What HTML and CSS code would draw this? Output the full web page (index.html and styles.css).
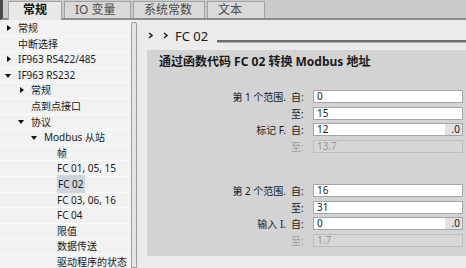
FILE: index.html
```html
<!DOCTYPE html>
<html lang="zh">
<head>
    <meta charset="UTF-8">
    <title>FC 02</title>
    <link rel="stylesheet" href="styles.css">
</head>
<body>
    <div class="tabs">
        <div class="tab active">常规</div>
        <div class="tab">IO 变量</div>
        <div class="tab">系统常数</div>
        <div class="tab">文本</div>
    </div>

    <div class="main">
        <ul class="tree">
            <li class="lv0 closed">常规</li>
            <li class="lv0">中断选择</li>
            <li class="lv0 closed">IF963 RS422/485</li>
            <li class="lv0 open">IF963 RS232</li>
            <li class="lv1 closed">常规</li>
            <li class="lv1">点到点接口</li>
            <li class="lv1 open">协议</li>
            <li class="lv2 open">Modbus 从站</li>
            <li class="lv3">帧</li>
            <li class="lv3">FC 01, 05, 15</li>
            <li class="lv3"><span class="selected">FC 02</span></li>
            <li class="lv3">FC 03, 06, 16</li>
            <li class="lv3">FC 04</li>
            <li class="lv3">限值</li>
            <li class="lv3">数据传送</li>
            <li class="lv3">驱动程序的状态</li>
        </ul>

        <div class="splitter"></div>

        <div class="content">
            <div class="crumb">
                <svg class="chev" width="6" height="7" viewBox="0 0 6 7"><path d="M1 1 L4 3.5 L1 6" fill="none" stroke="#222" stroke-width="1.6"/></svg>
                <svg class="chev" width="6" height="7" viewBox="0 0 6 7"><path d="M1 1 L4 3.5 L1 6" fill="none" stroke="#222" stroke-width="1.6"/></svg>
                <span class="crumb-title">FC 02</span>
                <span class="crumb-line"></span>
            </div>

            <div class="panel">
                <h2>通过函数代码 FC 02 转换 Modbus 地址</h2>

                <div class="group">
                    <div class="row">
                        <span class="label">第 1 个范围.</span>
                        <span class="sub">自:</span>
                        <span class="field">0</span>
                    </div>
                    <div class="row">
                        <span class="label"></span>
                        <span class="sub">至:</span>
                        <span class="field">15</span>
                    </div>
                    <div class="row">
                        <span class="label">标记 F.</span>
                        <span class="sub">自:</span>
                        <span class="field">12<span class="bit">.0</span></span>
                    </div>
                    <div class="row off">
                        <span class="label"></span>
                        <span class="sub">至:</span>
                        <span class="field">13.7</span>
                    </div>
                </div>

                <div class="group second">
                    <div class="row">
                        <span class="label">第 2 个范围.</span>
                        <span class="sub">自:</span>
                        <span class="field">16</span>
                    </div>
                    <div class="row">
                        <span class="label"></span>
                        <span class="sub">至:</span>
                        <span class="field">31</span>
                    </div>
                    <div class="row">
                        <span class="label">输入 I.</span>
                        <span class="sub">自:</span>
                        <span class="field">0<span class="bit">.0</span></span>
                    </div>
                    <div class="row off">
                        <span class="label"></span>
                        <span class="sub">至:</span>
                        <span class="field">1.7</span>
                    </div>
                </div>
            </div>
        </div>
    </div>
</body>
</html>
```

FILE: styles.css
```css
body {
    margin: 0;
    width: 466px;
    height: 268px;
    overflow: hidden;
    font-family: "Noto Sans", "Noto Sans CJK SC", sans-serif;
    font-size: 10px;
    color: #1a1a1a;
    background: #ececec;
}

/* tab strip */
.tabs {
    height: 18px;
    display: flex;
    align-items: flex-end;
    padding-left: 5px;
    gap: 2px;
    background: #cacaca;
    border-bottom: 2px solid #8c8c8c;
    border-left: 3px solid #4a4a4a;
}

.tab {
    height: 16px;
    line-height: 16px;
    padding: 0 10px;
    font-size: 12px;
    color: #4a4a4a;
    background: #d9d9d9;
    border: 1px solid #a2a2a2;
    border-bottom: none;
}

.tab:nth-child(2) { width: 45px; }
.tab:nth-child(3) { width: 50px; }
.tab:nth-child(4) { width: 36px; }

.tab.active {
    height: 18px;
    width: 32px;
    margin-bottom: -2px;
    font-weight: bold;
    color: #111;
    background: #e8e8e8;
    text-align: center;
}

.main {
    display: flex;
    height: 248px;
}

/* tree on the left */
.tree {
    list-style: none;
    margin: 0;
    padding: 1px 0 0 0;
    width: 131px;
    background: #f2f2f2;
    overflow: hidden;
}

.tree li {
    position: relative;
    height: 14.6px;
    line-height: 14.6px;
    border-bottom: 1px solid #fbfbfb;
    white-space: nowrap;
}

.lv0 { padding-left: 18px; }
.lv1 { padding-left: 31px; }
.lv2 { padding-left: 44px; }
.lv3 { padding-left: 57px; }

.tree li.closed::before,
.tree li.open::before {
    content: "";
    position: absolute;
    top: 50%;
}

.tree li.closed::before {
    margin-top: -3.5px;
    margin-left: -11px;
    border-left: 4px solid #111;
    border-top: 3.5px solid transparent;
    border-bottom: 3.5px solid transparent;
}

.tree li.open::before {
    margin-top: -1.5px;
    margin-left: -13px;
    border-top: 4px solid #111;
    border-left: 3.5px solid transparent;
    border-right: 3.5px solid transparent;
}

.selected {
    background: #cdd4de;
    padding: 2px 1px;
}

.splitter {
    width: 4px;
    margin: 2px 0 0 0;
    background: #e4e4e4;
    border: 1px solid #9c9c9c;
    border-radius: 2px 2px 0 0;
}

/* right side */
.content {
    flex: 1;
    padding-left: 10px;
    background: #ebebeb;
}

.crumb {
    height: 30px;
    display: flex;
    align-items: center;
    gap: 8px;
}

.chev { margin-left: 1px; }

.crumb-title {
    font-size: 13px;
    margin-left: -2px;
    margin-top: 1px;
}

.crumb-line {
    flex: 1;
    align-self: flex-end;
    height: 2px;
    margin-bottom: 7px;
    margin-left: 1px;
    background: #6e6e6e;
    border-bottom: 1px solid #b0b0b0;
}

.panel {
    height: 205px;
    background: #d3d3d3;
    padding-top: 1px;
}

.panel h2 {
    margin: 3px 0 0 12px;
    font-size: 12px;
    font-weight: bold;
    line-height: 16px;
}

.group {
    margin-top: 20px;
    display: flex;
    flex-direction: column;
    gap: 3.7px;
}

.group.second { margin-top: 31px; }

.row {
    display: flex;
    align-items: center;
    height: 13px;
}

.label {
    width: 139px;
    text-align: right;
}

.sub {
    width: 22px;
    padding-left: 5px;
}

.field {
    position: relative;
    width: 145px;
    height: 11px;
    line-height: 11px;
    padding-left: 3px;
    background: #fff;
    border: 1px solid #a6a6a6;
}

.bit {
    position: absolute;
    top: 0;
    right: 0;
    width: 15px;
    height: 11px;
    text-align: right;
    padding-right: 2px;
    background: #e2e2e2;
}

.row.off .sub { color: #a0a0a0; }

.row.off .field {
    background: #d6d6d6;
    border-color: #bdbdbd;
    color: #9c9c9c;
}
```
